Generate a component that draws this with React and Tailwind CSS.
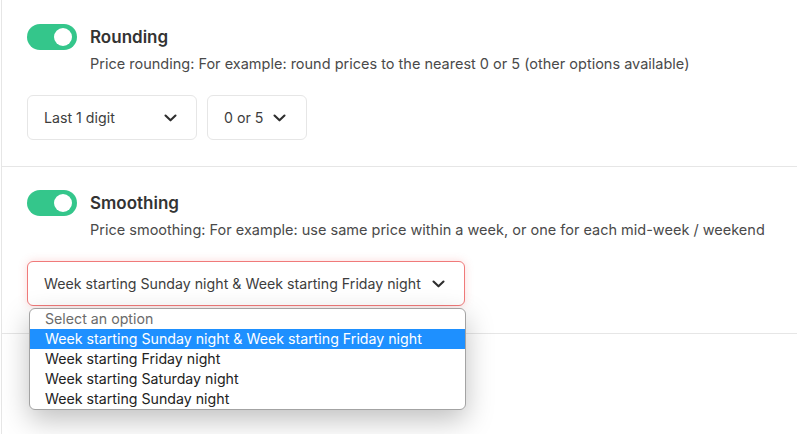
import React from "react";

const Chevron = () => (
  <svg width="13" height="8" viewBox="0 0 13 8" fill="none" className="shrink-0">
    <path d="M1.5 1.5 6.5 6.3l5-4.8" stroke="#2e2e2e" strokeWidth="2.1" strokeLinecap="round" strokeLinejoin="round" />
  </svg>
);

const Toggle = () => (
  <div className="relative w-[50px] h-[26px] rounded-full bg-[#34c68b] shrink-0">
    <div className="absolute right-[5px] top-[4px] w-[18px] h-[18px] rounded-full bg-white" />
  </div>
);

const Select = ({ label, className = "" }) => (
  <div
    className={`h-[45px] flex items-center justify-between pl-[16px] rounded-[6px] bg-white border text-[14.2px] text-[#3d3d3d] ${className}`}
  >
    <span>{label}</span>
    <Chevron />
  </div>
);

export default function App() {
  const font = { fontFamily: "Inter, 'Noto Sans', sans-serif" };
  return (
    <div className="w-[797px] h-[434px] overflow-hidden bg-white relative" style={font}>
      <div className="ml-[1px] border-l border-[#e6e6e6] h-full">
        <section className="h-[167px] border-b border-[#e6e6e6] pt-[24px] pl-[25px]">
          <div className="flex items-start gap-[13px]">
            <Toggle />
            <div>
              <div className="h-[26px] leading-[26px] text-[17px] font-semibold text-[#333]">Rounding</div>
              <div className="mt-[4px] text-[14.5px] leading-[20px] text-[#4a4a4a]">
                Price rounding: For example: round prices to the nearest 0 or 5 (other options available)
              </div>
            </div>
          </div>
          <div className="mt-[21px] flex gap-[10px]">
            <Select label="Last 1 digit" className="w-[170px] border-[#e6e6e6] pr-[19px]" />
            <Select label="0 or 5" className="w-[100px] border-[#e6e6e6] pr-[20px]" />
          </div>
        </section>
        <section className="h-[167px] border-b border-[#e6e6e6] pt-[23px] pl-[25px]">
          <div className="flex items-start gap-[13px]">
            <Toggle />
            <div>
              <div className="h-[26px] leading-[26px] text-[17px] font-semibold text-[#333]">Smoothing</div>
              <div className="mt-[4px] text-[14.5px] leading-[20px] text-[#4a4a4a]">
                Price smoothing: For example: use same price within a week, or one for each mid-week / weekend
              </div>
            </div>
          </div>
          <div className="mt-[21px] flex">
            <Select
              label="Week starting Sunday night & Week starting Friday night"
              className="w-[438px] border-[#f07a7a] pr-[19px] shadow-[0_0_8px_rgba(240,110,110,0.25)]"
            />
          </div>
        </section>
      </div>
      <div className="absolute left-[29px] top-[308px] w-[437px] rounded-[6px] border border-[#a3a3a3] bg-white overflow-hidden shadow-[0_10px_28px_rgba(0,0,0,0.25)] text-[14.2px] leading-[20px]">
        <div className="h-[20px] pl-[15px] text-[#6b6b6b]">Select an option</div>
        <div className="h-[20px] pl-[15px] bg-[#1e90ff] text-white">
          Week starting Sunday night &amp; Week starting Friday night
        </div>
        <div className="h-[20px] pl-[15px] text-[#222]">Week starting Friday night</div>
        <div className="h-[20px] pl-[15px] text-[#222]">Week starting Saturday night</div>
        <div className="h-[20px] pl-[15px] text-[#222]">Week starting Sunday night</div>
      </div>
    </div>
  );
}
